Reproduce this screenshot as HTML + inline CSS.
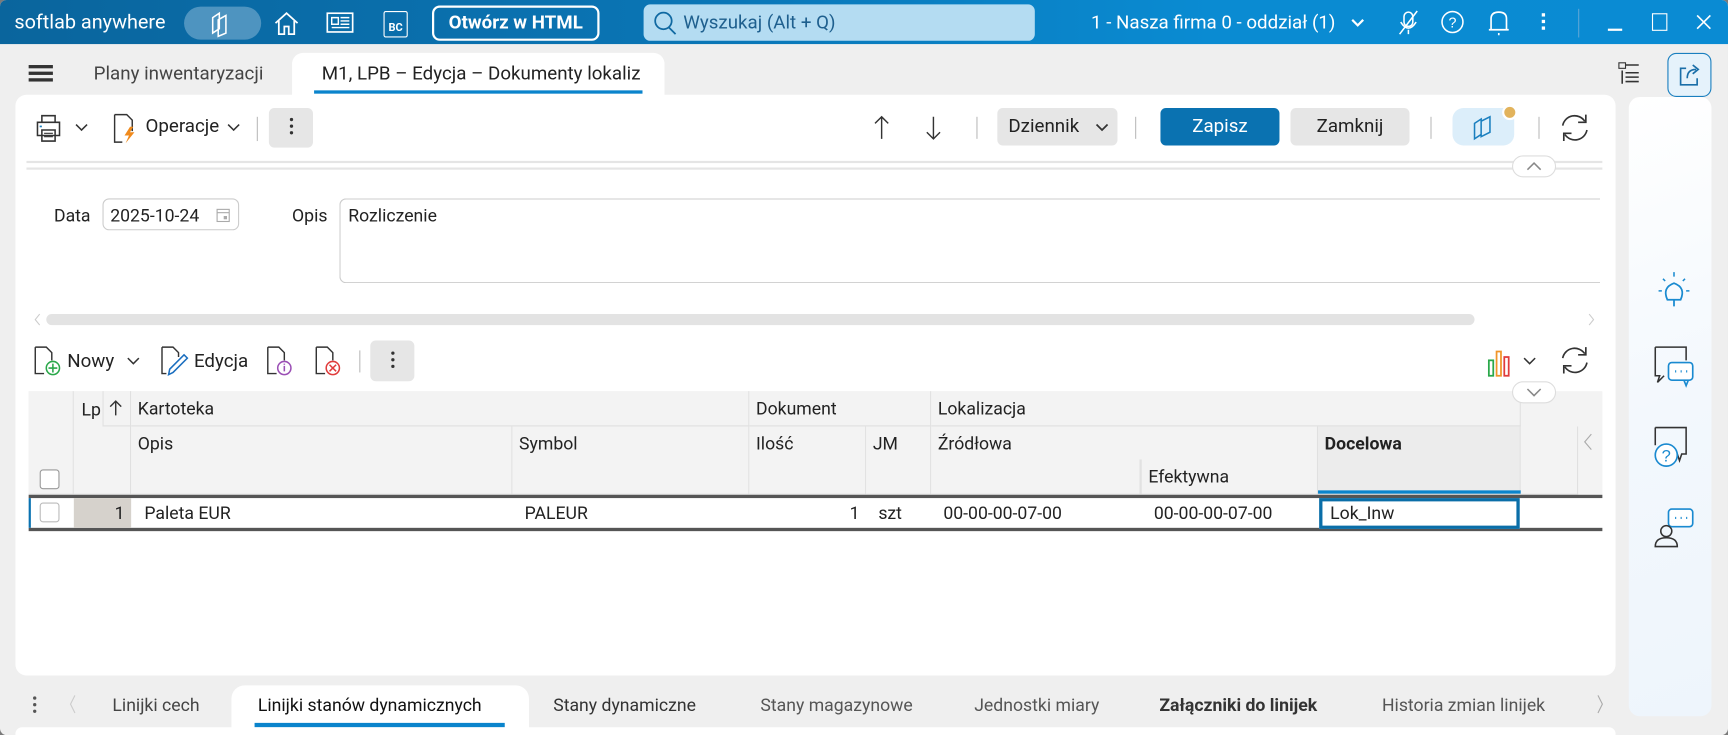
<!DOCTYPE html>
<html><head><meta charset="utf-8"><style>
*{box-sizing:border-box;margin:0;padding:0}
html,body{width:1728px;height:735px;overflow:hidden;background:#7a7a7a}
#w{width:1568px;height:667px;transform:scale(1.10204,1.10195);transform-origin:0 0;position:relative;background:#efefef;font-family:"Roboto","Liberation Sans",sans-serif;color:#222;border-radius:6px;overflow:hidden}
.a{position:absolute}
.t{font-size:16px;white-space:nowrap}
svg{position:absolute;overflow:visible}
.title{left:0;top:0;width:1568px;height:40px;background:linear-gradient(90deg,#0a659d 0%,#0a75b5 40%,#0a8bd2 70%,#0a8bd3 100%)}
.wt{color:#fff}
.gcell{position:absolute;border-right:1px solid #e0e0e0;border-bottom:1px solid #e0e0e0;background:#f3f3f3;font-size:16px;padding:6px 6px}
</style></head><body><div id="w">
<div class="a title"></div>
<div class="a t wt" style="left:13px;top:10px;font-size:18px">softlab anywhere</div>
<div class="a" style="left:167px;top:6px;width:70px;height:30px;border-radius:15px;background:#4e94c0"></div>
<svg style="left:187px;top:10px" width="30" height="24"><path d="M6 6 L12 2 L12 16 L6 20Z M11 8 L18 4 L18 20 L11 23Z" fill="none" stroke="#fff" stroke-width="1.4"/></svg>
<svg style="left:248px;top:10px" width="24" height="22"><path d="M2 11 L12 2 L22 11 M5 9 V21 H10 V14 H14 V21 H19 V9" fill="none" stroke="#fff" stroke-width="1.6"/></svg>
<svg style="left:296px;top:11px" width="26" height="20"><rect x="1" y="1" width="23" height="17" fill="none" stroke="#fff" stroke-width="1.5"/><path d="M5 5h6v6h-6z M13 5h8 M13 8h8 M13 11h8 M5 14h16" stroke="#fff" fill="none" stroke-width="1.3"/></svg>
<div class="a" style="left:348px;top:10px;width:22px;height:24px;border:1.5px solid #fff;border-radius:2px;color:#fff;font-size:10px;font-weight:bold;text-align:center;padding-top:9px">BC</div>
<div class="a t wt" style="left:392px;top:5px;width:152px;height:32px;border:2px solid #fff;border-radius:7px;text-align:center;line-height:28px;font-size:17px;font-weight:bold">Otwórz w HTML</div>
<div class="a" style="left:584px;top:4px;width:355px;height:33px;background:#b4dcf2;border-radius:6px"></div>
<svg style="left:592px;top:10px" width="22" height="22"><circle cx="10" cy="9" r="7.5" fill="none" stroke="#1069a2" stroke-width="1.6"/><path d="M15 15 L21 21" stroke="#1069a2" stroke-width="1.6"/></svg>
<div class="a t" style="left:620px;top:11px;font-size:17px;color:#1e5f8e">Wyszukaj (Alt + Q)</div>
<div class="a t wt" style="left:990px;top:11px;font-size:17px">1 - Nasza firma 0 - oddział (1)</div>
<svg style="left:1226px;top:17px" width="12" height="8"><path d="M1 1 L6 6 L11 1" stroke="#fff" stroke-width="2" fill="none"/></svg>
<svg style="left:1266px;top:9px" width="24" height="24"><rect x="8" y="2" width="8" height="13" rx="4" fill="none" stroke="#fff" stroke-width="1.4"/><path d="M5 11 Q12 22 19 11 M12 18v4 M4 22 L20 1" stroke="#fff" stroke-width="1.4" fill="none"/></svg>
<svg style="left:1307px;top:9px" width="22" height="22"><circle cx="11" cy="11" r="9.5" fill="none" stroke="#fff" stroke-width="1.4"/><text x="11" y="16" font-size="13" fill="#fff" text-anchor="middle" font-family="Liberation Sans">?</text></svg>
<svg style="left:1350px;top:8px" width="20" height="26"><path d="M3 19 L3 9 Q3 3 10 3 Q17 3 17 9 L17 19 Z M1 19 H19 M10 22 V24" stroke="#fff" stroke-width="1.5" fill="none"/></svg>
<div class="a" style="left:1399px;top:12px;width:3px;height:3px;background:#fff;box-shadow:0 6px #fff,0 12px #fff"></div>
<div class="a" style="left:1432px;top:8px;width:1px;height:26px;background:#5aa6d6"></div>
<div class="a" style="left:1459px;top:26px;width:13px;height:2px;background:#fff"></div>
<div class="a" style="left:1499px;top:12px;width:14px;height:16px;border:1.5px solid #fff"></div>
<svg style="left:1538px;top:12px" width="16" height="16"><path d="M2 2 L14 14 M14 2 L2 14" stroke="#fff" stroke-width="1.5"/></svg>

<div class="a" style="left:26px;top:59px;width:22px;height:3px;background:#333;box-shadow:0 6px #333,0 12px #333"></div>
<div class="a t" style="left:85px;top:57px;font-size:17px;color:#444">Plany inwentaryzacji</div>
<div class="a" style="left:265px;top:48px;width:338px;height:44px;background:#fff;border-radius:10px 10px 0 0"></div>
<div class="a t" style="left:292px;top:57px;font-size:17px;width:290px;overflow:hidden;color:#222">M1, LPB – Edycja – Dokumenty lokaliz<span style="color:#ccc">a</span></div>
<div class="a" style="left:285px;top:82px;width:298px;height:3px;background:#0a84cc"></div>
<svg style="left:1468px;top:55px" width="24" height="24"><rect x="1" y="2" width="6" height="5" fill="none" stroke="#333"/><path d="M7 4h12 M4 9v12 M7 11h12 M7 15h12 M7 19h12" stroke="#333" stroke-width="1.4"/></svg>
<div class="a" style="left:1513px;top:48px;width:40px;height:40px;border:1.5px solid #1a7fbf;border-radius:8px;background:#e5f2fb"></div>
<svg style="left:1522px;top:56px" width="24" height="24"><path d="M8 6 H3 V21 H18 V15" fill="none" stroke="#1a6ea8" stroke-width="1.5"/><path d="M9 15 Q9 7 17 7 M14 3 L19 7 L14 11" fill="none" stroke="#1a6ea8" stroke-width="1.5"/></svg>

<div class="a" style="left:14px;top:86px;width:1452px;height:527px;background:#fff;border-radius:10px"></div>
<div class="a" style="left:1478px;top:88px;width:75px;height:562px;background:linear-gradient(160deg,#fff 0%,#f3f8fd 50%,#eef5fc 100%);border-radius:10px"></div>

<svg style="left:30px;top:102px" width="28" height="28"><path d="M8 9 V3 H20 V9 M4 9 H24 V21 H4 Z M8 16 H20 V26 H8 Z" fill="#fff" stroke="#333" stroke-width="1.4"/><rect x="6" y="12" width="2" height="1.5" fill="#1a7fbf"/><path d="M10 19h8 M10 22h8" stroke="#333"/></svg>
<svg style="left:68px;top:112px" width="12" height="8"><path d="M1 1 L6 6 L11 1" stroke="#333" stroke-width="1.4" fill="none"/></svg>
<svg style="left:102px;top:103px" width="24" height="28"><path d="M2 1 H13 L18 6 V16 M2 1 V26 H9" fill="none" stroke="#333" stroke-width="1.3"/><path d="M16 12 L11 20 H15 L12 27 L20 17 H16 L19 12Z" fill="#f08a1c"/></svg>
<div class="a t" style="left:132px;top:105px;font-size:17px">Operacje</div>
<svg style="left:206px;top:112px" width="12" height="8"><path d="M1 1 L6 6 L11 1" stroke="#333" stroke-width="1.4" fill="none"/></svg>
<div class="a" style="left:233px;top:106px;width:1px;height:22px;background:#bbb"></div>
<div class="a" style="left:244px;top:98px;width:40px;height:36px;background:#e6e6e6;border-radius:5px"></div>
<div class="a" style="left:263px;top:107px;width:3px;height:3px;background:#333;box-shadow:0 6px #333,0 12px #333;border-radius:2px"></div>
<svg style="left:792px;top:104px" width="16" height="24"><path d="M8 2 V22 M2 8 L8 2 L14 8" stroke="#333" stroke-width="1.3" fill="none"/></svg>
<svg style="left:839px;top:104px" width="16" height="24"><path d="M8 2 V22 M2 16 L8 22 L14 16" stroke="#333" stroke-width="1.3" fill="none"/></svg>
<div class="a" style="left:886px;top:106px;width:1px;height:20px;background:#bbb"></div>
<div class="a" style="left:905px;top:98px;width:109px;height:34px;background:#e6e6e6;border-radius:5px"></div>
<div class="a t" style="left:915px;top:105px;font-size:17px">Dziennik</div>
<svg style="left:994px;top:112px" width="12" height="8"><path d="M1 1 L6 6 L11 1" stroke="#333" stroke-width="1.6" fill="none"/></svg>
<div class="a" style="left:1030px;top:106px;width:1px;height:20px;background:#bbb"></div>
<div class="a t" style="left:1053px;top:98px;width:108px;height:34px;background:#0a72b1;border-radius:5px;color:#fff;text-align:center;line-height:34px;font-size:17px">Zapisz</div>
<div class="a t" style="left:1171px;top:98px;width:108px;height:34px;background:#e6e6e6;border-radius:5px;text-align:center;line-height:34px;font-size:17px">Zamknij</div>
<div class="a" style="left:1298px;top:106px;width:1px;height:20px;background:#bbb"></div>
<div class="a" style="left:1318px;top:98px;width:56px;height:34px;background:#dceefa;border-radius:10px"></div>
<svg style="left:1334px;top:104px" width="26" height="24"><path d="M4 8 L10 4 L10 18 L4 22Z M10 6 L18 2 L18 16 L10 20Z" fill="none" stroke="#1a7fbf" stroke-width="1.4"/></svg>
<div class="a" style="left:1363px;top:95px;width:14px;height:14px;border-radius:50%;background:#e2b35c;border:2px solid #fff"></div>
<div class="a" style="left:1396px;top:106px;width:1px;height:20px;background:#bbb"></div>
<svg style="left:1414px;top:101px" width="30" height="30"><path d="M4 13 A11 11 0 0 1 24 9 M26 17 A11 11 0 0 1 6 21" fill="none" stroke="#333" stroke-width="1.5"/><path d="M25 3 V10 H18 M5 27 V20 H12" fill="none" stroke="#333" stroke-width="1.5"/></svg>
<div class="a" style="left:24px;top:146px;width:1430px;height:2px;background:#e5e5e5"></div>
<div class="a" style="left:24px;top:152px;width:1430px;height:2px;background:#e5e5e5"></div>
<div class="a" style="left:1372px;top:141px;width:40px;height:20px;border:1px solid #ddd;border-radius:10px;background:#fff"></div>
<svg style="left:1384px;top:146px" width="16" height="10"><path d="M2 8 L8 2 L14 8" stroke="#888" stroke-width="1.4" fill="none"/></svg>

<div class="a t" style="left:49px;top:186px">Data</div>
<div class="a" style="left:93px;top:180px;width:124px;height:29px;border:1px solid #ccc;border-radius:6px"></div>
<div class="a t" style="left:100px;top:186px">2025-10-24</div>
<svg style="left:196px;top:188px" width="14" height="14"><rect x="1" y="2" width="11" height="11" fill="none" stroke="#aaa"/><path d="M1 5h11" stroke="#aaa"/><rect x="7" y="8" width="3" height="3" fill="#aaa"/></svg>
<div class="a t" style="left:265px;top:186px">Opis</div>
<div class="a" style="left:308px;top:180px;width:1144px;height:77px;border:1px solid #ccc;border-right:none;border-radius:6px 0 0 6px"></div>
<div class="a t" style="left:316px;top:186px">Rozliczenie</div>
<svg style="left:30px;top:284px" width="8" height="12"><path d="M6 1 L2 6 L6 11" stroke="#ccc" fill="none"/></svg>
<div class="a" style="left:42px;top:285px;width:1296px;height:10px;background:#e3e3e3;border-radius:5px"></div>
<svg style="left:1440px;top:284px" width="8" height="12"><path d="M2 1 L6 6 L2 11" stroke="#ccc" fill="none"/></svg>

<svg style="left:30px;top:314px" width="28" height="28"><path d="M2 1 H12 L17 6 V13 M2 1 V25 H10" fill="none" stroke="#333" stroke-width="1.3"/><circle cx="18" cy="20" r="6" fill="#fff" stroke="#2aa84a" stroke-width="1.4"/><path d="M18 16v8 M14 20h8" stroke="#2aa84a" stroke-width="1.4"/></svg>
<div class="a t" style="left:61px;top:318px;font-size:17px">Nowy</div>
<svg style="left:115px;top:324px" width="12" height="8"><path d="M1 1 L6 6 L11 1" stroke="#333" stroke-width="1.4" fill="none"/></svg>
<svg style="left:145px;top:314px" width="28" height="28"><path d="M2 1 H12 L17 6 V10 M2 1 V25 H6" fill="none" stroke="#333" stroke-width="1.3"/><path d="M8 26 L9 21 L22 8 L25 11 L12 24Z" fill="none" stroke="#1a6ebf" stroke-width="1.4"/></svg>
<div class="a t" style="left:176px;top:318px;font-size:17px">Edycja</div>
<svg style="left:241px;top:314px" width="28" height="28"><path d="M2 1 H12 L17 6 V13 M2 1 V25 H10" fill="none" stroke="#333" stroke-width="1.3"/><circle cx="17" cy="20" r="6" fill="#fff" stroke="#9b4fb5" stroke-width="1.4"/><path d="M17 18v5 M17 16v1" stroke="#9b4fb5" stroke-width="1.4"/></svg>
<svg style="left:285px;top:314px" width="28" height="28"><path d="M2 1 H12 L17 6 V13 M2 1 V25 H10" fill="none" stroke="#333" stroke-width="1.3"/><circle cx="17" cy="20" r="6" fill="#fff" stroke="#e03c3c" stroke-width="1.4"/><path d="M14 17 L20 23 M20 17 L14 23" stroke="#e03c3c" stroke-width="1.4"/></svg>
<div class="a" style="left:326px;top:318px;width:1px;height:20px;background:#bbb"></div>
<div class="a" style="left:336px;top:309px;width:40px;height:37px;background:#e6e6e6;border-radius:5px"></div>
<div class="a" style="left:355px;top:319px;width:3px;height:3px;background:#333;box-shadow:0 6px #333,0 12px #333;border-radius:2px"></div>
<svg style="left:1350px;top:317px" width="26" height="26"><rect x="1" y="10" width="4" height="14" fill="none" stroke="#2aa84a" stroke-width="1.6"/><rect x="8" y="2" width="4" height="22" fill="none" stroke="#f0962a" stroke-width="1.6"/><rect x="15" y="7" width="4" height="17" fill="none" stroke="#e03c3c" stroke-width="1.6"/></svg>
<svg style="left:1382px;top:324px" width="12" height="8"><path d="M1 1 L6 6 L11 1" stroke="#333" stroke-width="1.4" fill="none"/></svg>
<svg style="left:1414px;top:312px" width="30" height="30"><path d="M4 13 A11 11 0 0 1 24 9 M26 17 A11 11 0 0 1 6 21" fill="none" stroke="#333" stroke-width="1.5"/><path d="M25 3 V10 H18 M5 27 V20 H12" fill="none" stroke="#333" stroke-width="1.5"/></svg>

<div class="a" style="left:26px;top:355px;width:1428px;height:94px;background:#f3f3f3"></div>
<div class="gcell" style="left:26px;top:355px;width:41px;height:94px"></div>
<div class="gcell" style="left:67px;top:355px;width:52px;height:94px;padding:0"></div>
<div class="a t" style="left:74px;top:362px">Lp</div>
<div class="gcell" style="left:93px;top:355px;width:26px;height:32px;border-left:1px solid #e0e0e0"></div>
<svg style="left:99px;top:362px" width="12" height="16"><path d="M6 15 V2 M1 7 L6 2 L11 7" stroke="#333" stroke-width="1.3" fill="none"/></svg>
<div class="gcell" style="left:119px;top:355px;width:561px;height:32px">Kartoteka</div>
<div class="gcell" style="left:680px;top:355px;width:165px;height:32px">Dokument</div>
<div class="gcell" style="left:845px;top:355px;width:535px;height:32px">Lokalizacja</div>
<div class="gcell" style="left:119px;top:387px;width:346px;height:62px">Opis</div>
<div class="gcell" style="left:465px;top:387px;width:215px;height:62px">Symbol</div>
<div class="gcell" style="left:680px;top:387px;width:106px;height:62px">Ilość</div>
<div class="gcell" style="left:786px;top:387px;width:59px;height:62px">JM</div>
<div class="gcell" style="left:845px;top:387px;width:351px;height:30px;border-bottom:none">Źródłowa</div>
<div class="gcell" style="left:845px;top:417px;width:190px;height:32px"></div>
<div class="gcell" style="left:1035px;top:417px;width:161px;height:32px;border-left:1px solid #e0e0e0">Efektywna</div>
<div class="gcell" style="left:1196px;top:387px;width:184px;height:62px;background:#ececec;font-weight:bold">Docelowa</div>
<div class="a" style="left:1196px;top:445px;width:184px;height:3px;background:#0a84cc"></div>
<div class="gcell" style="left:1380px;top:387px;width:52px;height:62px"></div>
<svg style="left:1436px;top:393px" width="10" height="16"><path d="M8 1 L2 8 L8 15" stroke="#aaa" fill="none"/></svg>
<div class="a" style="left:1372px;top:346px;width:40px;height:20px;border:1px solid #ddd;border-radius:10px;background:#fff"></div>
<svg style="left:1384px;top:351px" width="16" height="10"><path d="M2 2 L8 8 L14 2" stroke="#888" stroke-width="1.4" fill="none"/></svg>
<div class="a" style="left:36px;top:426px;width:18px;height:18px;border:1px solid #999;border-radius:3px;background:#fff"></div>
<div class="a" style="left:26px;top:449px;width:1428px;height:33px;border-top:3px solid #555;border-bottom:3px solid #555;background:#fff"></div>
<div class="a" style="left:26px;top:452px;width:2px;height:27px;background:#0a72b1"></div>
<div class="a" style="left:67px;top:452px;width:52px;height:27px;background:#d6d2cc"></div>
<div class="a" style="left:36px;top:456px;width:18px;height:18px;border:1px solid #bbb;border-radius:3px;background:#fff"></div>
<div class="a t" style="left:104px;top:456px">1</div>
<div class="a t" style="left:131px;top:456px">Paleta EUR</div>
<div class="a t" style="left:476px;top:456px">PALEUR</div>
<div class="a t" style="left:771px;top:456px">1</div>
<div class="a t" style="left:797px;top:456px">szt</div>
<div class="a t" style="left:856px;top:456px">00-00-00-07-00</div>
<div class="a t" style="left:1047px;top:456px">00-00-00-07-00</div>
<div class="a" style="left:1197px;top:452px;width:182px;height:28px;border:3px solid #0a6ea8;background:#fff"></div>
<div class="a t" style="left:1207px;top:456px">Lok_Inw</div>

<svg style="left:1502px;top:245px" width="34" height="36"><path d="M17 2v4 M7 8l2 2 M27 8l-2 2 M3 19h3 M28 19h3" stroke="#1a8ad0" stroke-width="1.4"/><path d="M11 27 Q6 16 17 12 Q28 16 23 27 Z M17 27 V33" stroke="#1a8ad0" stroke-width="1.6" fill="none"/></svg>
<svg style="left:1498px;top:313px" width="42" height="42"><path d="M4 2 H32 V14 M4 2 V28 H8 L6 34 L12 28" fill="none" stroke="#333" stroke-width="1.4"/><rect x="16" y="16" width="22" height="16" rx="3" fill="#fff" stroke="#1a8ad0" stroke-width="1.5"/><path d="M30 32 L32 37 L34 32" fill="none" stroke="#1a8ad0" stroke-width="1.5"/><path d="M22 24h1 M27 24h1 M32 24h1" stroke="#1a8ad0" stroke-width="2"/></svg>
<svg style="left:1498px;top:386px" width="42" height="42"><path d="M4 2 H32 V26 H28 L26 32 L24 26" fill="none" stroke="#333" stroke-width="1.4"/><path d="M4 2 V18" stroke="#333" stroke-width="1.4"/><circle cx="14" cy="27" r="10" fill="#fff" stroke="#1a8ad0" stroke-width="1.5"/><text x="14" y="33" font-size="15" fill="#1a8ad0" text-anchor="middle" font-family="Liberation Sans">?</text></svg>
<svg style="left:1498px;top:460px" width="42" height="42"><rect x="16" y="2" width="22" height="16" rx="3" fill="#fff" stroke="#1a8ad0" stroke-width="1.5"/><path d="M22 10h1 M27 10h1 M32 10h1" stroke="#1a8ad0" stroke-width="2"/><circle cx="14" cy="22" r="5" fill="none" stroke="#333" stroke-width="1.4"/><path d="M4 36 Q4 28 14 28 Q24 28 24 36 Z" fill="none" stroke="#333" stroke-width="1.4"/></svg>

<div class="a" style="left:30px;top:632px;width:3px;height:3px;background:#555;box-shadow:0 6px #555,0 12px #555;border-radius:2px"></div>
<svg style="left:62px;top:630px" width="8" height="18"><path d="M6 1 L2 9 L6 17" stroke="#ccc" fill="none"/></svg>
<div class="a t" style="left:102px;top:630px;color:#444">Linijki cech</div>
<div class="a" style="left:210px;top:622px;width:270px;height:45px;background:#fff;border-radius:12px 12px 0 0"></div>
<div class="a t" style="left:234px;top:630px;color:#111">Linijki stanów dynamicznych</div>
<div class="a" style="left:231px;top:656px;width:227px;height:4px;background:#0a84cc"></div>
<div class="a t" style="left:502px;top:630px;color:#333">Stany dynamiczne</div>
<div class="a t" style="left:690px;top:630px;color:#555">Stany magazynowe</div>
<div class="a t" style="left:884px;top:630px;color:#555">Jednostki miary</div>
<div class="a t" style="left:1052px;top:630px;color:#333;font-weight:bold">Załączniki do linijek</div>
<div class="a t" style="left:1254px;top:630px;color:#555">Historia zmian linijek</div>
<svg style="left:1448px;top:630px" width="8" height="18"><path d="M2 1 L6 9 L2 17" stroke="#aaa" fill="none"/></svg>
<div class="a" style="left:14px;top:660px;width:1452px;height:10px;background:#fff;border-radius:6px 6px 0 0"></div>
</div></body></html>
